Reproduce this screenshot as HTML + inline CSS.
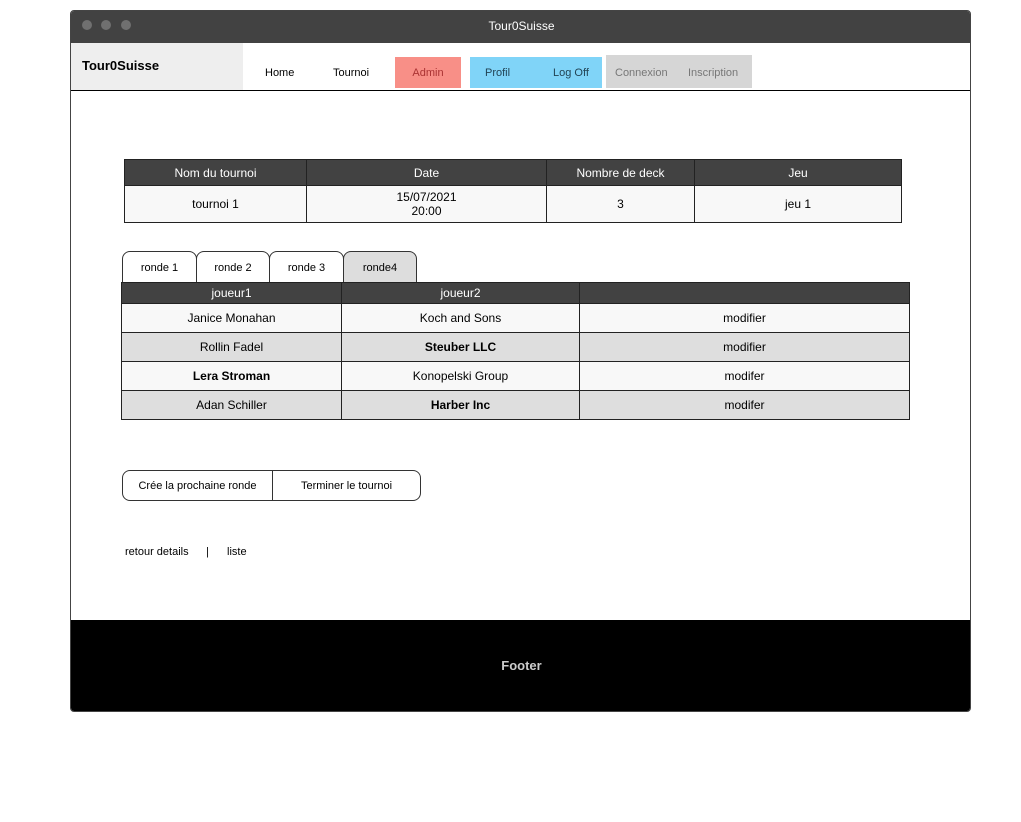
<!DOCTYPE html>
<html><head><style>
*{margin:0;padding:0;box-sizing:border-box}
body{width:1021px;height:822px;background:#fff;font-family:"Liberation Sans",sans-serif;font-size:12px;position:relative;overflow:hidden;color:#000}
.abs{position:absolute}
.win{left:70px;top:10px;width:901px;height:702px;border:1px solid #444;border-radius:4px;overflow:hidden}
.bar{left:0;top:0;width:901px;height:32px;background:#424242;color:#fff;text-align:center;line-height:30px;font-size:12px}
.dot{width:10px;height:10px;border-radius:5px;background:#707070;top:9px}
table{border-collapse:collapse;position:absolute;font-size:12px}
td,th{border:1px solid #222;text-align:center;font-weight:normal}
th{background:#424242;color:#fff}
.c{display:flex;align-items:center;justify-content:center}
</style></head><body>
<div class="abs win">
<div class="abs bar">Tour0Suisse</div>
<div class="abs dot" style="left:11px"></div><div class="abs dot" style="left:30px"></div><div class="abs dot" style="left:50px"></div>
<div class="abs" style="left:0;top:32px;width:172px;height:48px;background:#eee;font-weight:bold;font-size:13px;line-height:46px;padding-left:11px">Tour0Suisse</div>
<div class="abs" style="left:0;top:79px;width:901px;height:1px;background:#000"></div>
<div class="abs" style="left:194px;top:56px;font-size:11px">Home</div>
<div class="abs" style="left:262px;top:56px;font-size:11px">Tournoi</div>
<div class="abs c" style="left:324px;top:46px;width:66px;height:31px;background:#f88f87;color:#a33;font-size:11px">Admin</div>
<div class="abs" style="left:399px;top:46px;width:132px;height:31px;background:#80d4f8;font-size:11px;color:#245"><span class="abs" style="left:15px;top:10px">Profil</span><span class="abs" style="left:83px;top:10px">Log Off</span></div>
<div class="abs" style="left:535px;top:44px;width:146px;height:33px;background:#d6d6d6;font-size:11px;color:#777"><span class="abs" style="left:9px;top:12px">Connexion</span><span class="abs" style="left:82px;top:12px">Inscription</span></div>
<div class="abs c" style="left:0;top:609px;width:901px;height:93px;background:#000;color:#ccc;font-weight:bold;font-size:13px;padding-bottom:2px">Footer</div>
</div>
<table style="left:124px;top:159px;width:778px">
<tr style="height:26px"><th style="width:182px">Nom du tournoi</th><th style="width:240px">Date</th><th style="width:148px">Nombre de deck</th><th>Jeu</th></tr>
<tr style="height:37px;background:#f8f8f8"><td>tournoi 1</td><td>15/07/2021<br>20:00</td><td>3</td><td>jeu 1</td></tr>
</table>
<div class="abs c" style="left:122px;top:251px;width:75px;height:32px;border:1px solid #333;border-bottom:none;border-radius:8px 8px 0 0;font-size:11px">ronde 1</div>
<div class="abs c" style="left:196px;top:251px;width:74px;height:32px;border:1px solid #333;border-bottom:none;border-radius:8px 8px 0 0;font-size:11px">ronde 2</div>
<div class="abs c" style="left:269px;top:251px;width:75px;height:32px;border:1px solid #333;border-bottom:none;border-radius:8px 8px 0 0;font-size:11px">ronde 3</div>
<div class="abs c" style="left:343px;top:251px;width:74px;height:32px;border:1px solid #333;border-bottom:none;border-radius:8px 8px 0 0;font-size:11px;background:#ddd">ronde4</div>
<table style="left:121px;top:282px;width:789px">
<tr style="height:21px"><th style="width:220px">joueur1</th><th style="width:238px">joueur2</th><th></th></tr>
<tr style="height:29px;background:#f8f8f8"><td>Janice Monahan</td><td>Koch and Sons</td><td>modifier</td></tr>
<tr style="height:29px;background:#dedede"><td>Rollin Fadel</td><td><b>Steuber LLC</b></td><td>modifier</td></tr>
<tr style="height:29px;background:#f8f8f8"><td><b>Lera Stroman</b></td><td>Konopelski Group</td><td>modifer</td></tr>
<tr style="height:29px;background:#dedede"><td>Adan Schiller</td><td><b>Harber Inc</b></td><td>modifer</td></tr>
</table>
<div class="abs" style="left:122px;top:470px;width:299px;height:31px;border:1px solid #333;border-radius:8px;font-size:11px">
<div class="abs c" style="left:0;top:0;width:150px;height:29px;border-right:1px solid #333">Crée la prochaine ronde</div>
<div class="abs c" style="left:150px;top:0;width:147px;height:29px">Terminer le tournoi</div></div>
<div class="abs" style="left:125px;top:546px;font-size:11px">retour details</div>
<div class="abs" style="left:206px;top:546px;font-size:11px">|</div>
<div class="abs" style="left:227px;top:546px;font-size:11px">liste</div>
</body></html>
